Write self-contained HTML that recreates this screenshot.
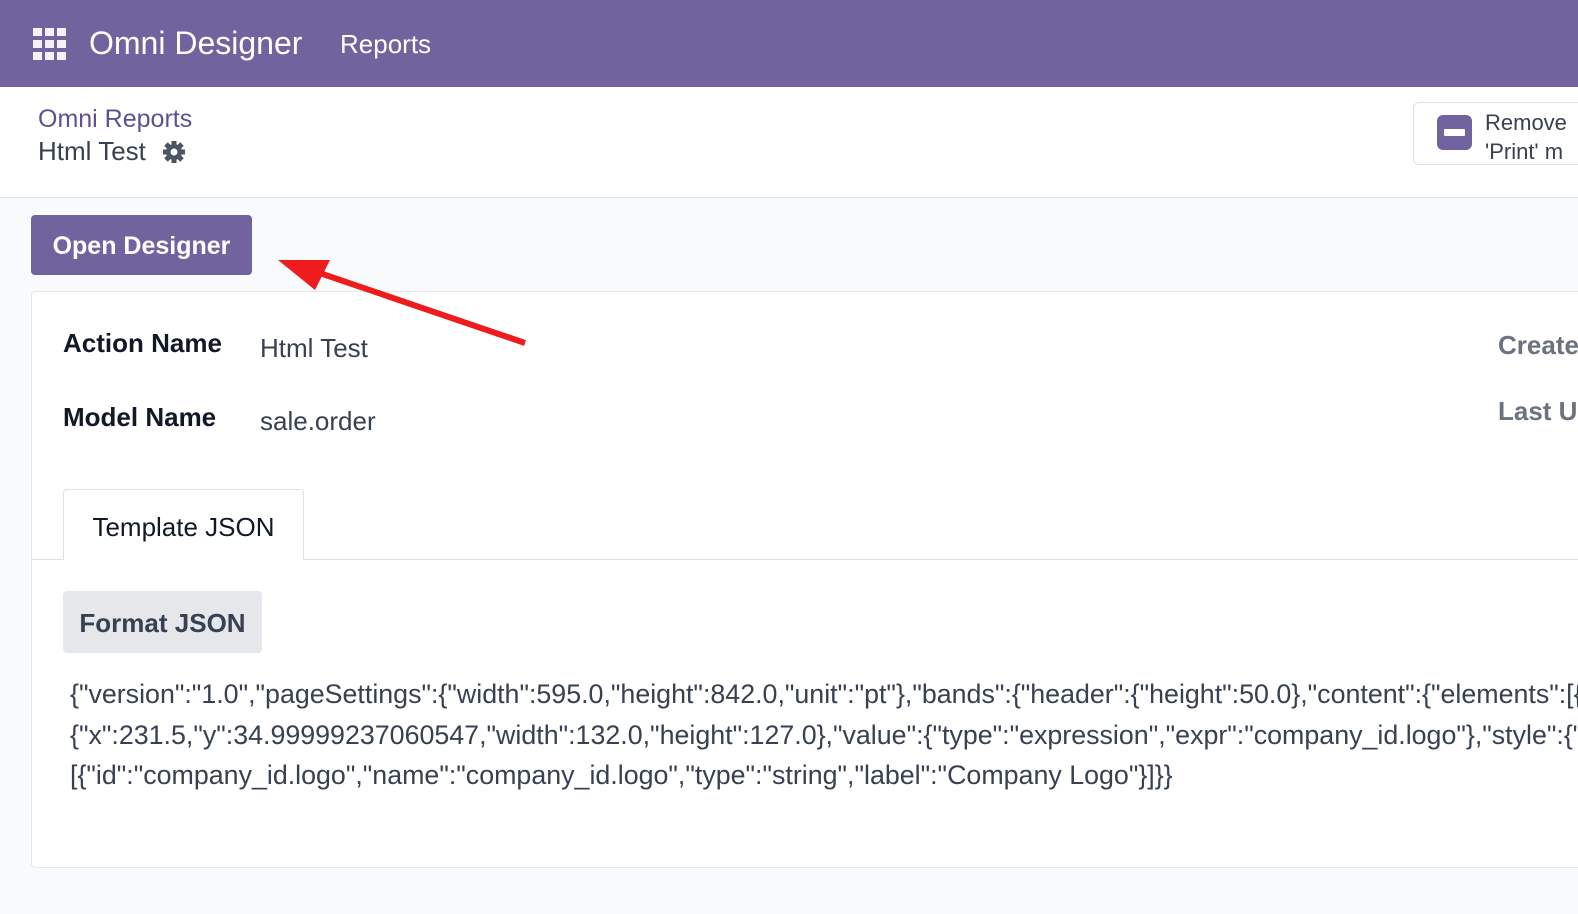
<!DOCTYPE html>
<html><head><meta charset="utf-8"><style>
*{margin:0;padding:0;box-sizing:border-box}
body{width:1578px;height:914px;overflow:hidden;background:#f9fafb;font-family:"Liberation Sans",sans-serif;color:#374151;position:relative}
.nav{position:absolute;left:0;top:0;width:1578px;height:87px;background:#71639e}
.abs{position:absolute;white-space:nowrap}
.hdr{position:absolute;left:0;top:87px;width:1578px;height:111px;background:#fff;border-bottom:1px solid #dee2e6}
.card{position:absolute;left:31px;top:291px;width:1560px;height:577px;background:#fff;border:1px solid #e5e7eb;border-radius:4px}
</style></head><body>
<div class="nav">
 <svg class="abs" style="left:33px;top:28px" width="34" height="32" viewBox="0 0 34 32" fill="#f3f2f7">
  <rect x="0" y="0" width="9" height="8"/><rect x="12" y="0" width="9" height="8"/><rect x="24" y="0" width="9" height="8"/>
  <rect x="0" y="12" width="9" height="8"/><rect x="12" y="12" width="9" height="8"/><rect x="24" y="12" width="9" height="8"/>
  <rect x="0" y="24" width="9" height="8"/><rect x="12" y="24" width="9" height="8"/><rect x="24" y="24" width="9" height="8"/>
 </svg>
 <div class="abs" style="left:89px;top:25px;font-size:32px;color:#fff">Omni Designer</div>
 <div class="abs" style="left:340px;top:29px;font-size:26px;color:#fff">Reports</div>
</div>
<div class="hdr">
 <div class="abs" style="left:38px;top:18px;font-size:25px;color:#5f5190">Omni Reports</div>
 <div class="abs" style="left:38px;top:49px;font-size:26px;color:#374151">Html Test</div>
 <svg class="abs" style="left:162px;top:53px" width="24" height="24" viewBox="0 0 24 24"><g fill="#4b5563"><circle cx="12" cy="12" r="8"/><g stroke="#4b5563" stroke-width="5"><line x1="12" y1="1" x2="12" y2="23"/><line x1="1" y1="12" x2="23" y2="12"/><line x1="4" y1="4" x2="20" y2="20"/><line x1="20" y1="4" x2="4" y2="20"/></g><circle cx="12" cy="12" r="3.5" fill="#fff"/></g></svg>
 <div class="abs" style="left:1413px;top:15px;width:180px;height:63px;border:1px solid #dee2e6;border-radius:6px;background:#fff"></div>
 <div class="abs" style="left:1437px;top:28px;width:35px;height:35px;background:#71639e;border-radius:6px"><div style="position:absolute;left:7px;top:14px;width:21px;height:7px;background:#fff;border-radius:1px"></div></div>
 <div class="abs" style="left:1485px;top:21px;font-size:22px;line-height:29px;color:#374151">Remove<br>'Print' m</div>
</div>
<div class="abs" style="left:31px;top:215px;width:221px;height:60px;background:#71639e;border-radius:4px;color:#fff;font-size:25px;font-weight:bold;text-align:center;line-height:62px">Open Designer</div>
<div class="card">
 <div class="abs" style="left:31px;top:36px;font-size:26px;font-weight:bold;color:#111827">Action Name</div>
 <div class="abs" style="left:228px;top:41px;font-size:26px">Html Test</div>
 <div class="abs" style="left:31px;top:110px;font-size:26px;font-weight:bold;color:#111827">Model Name</div>
 <div class="abs" style="left:228px;top:114px;font-size:26px">sale.order</div>
 <div class="abs" style="left:1466px;top:38px;font-size:26px;font-weight:bold;color:#6b7280">Create</div>
 <div class="abs" style="left:1466px;top:104px;font-size:26px;font-weight:bold;color:#6b7280">Last U</div>
 <div class="abs" style="left:0;top:267px;width:1560px;border-top:1px solid #dee2e6"></div>
 <div class="abs" style="left:31px;top:197px;width:241px;height:71px;background:#fff;border:1px solid #dee2e6;border-bottom:none;border-radius:4px 4px 0 0;font-size:26px;color:#111827;text-align:center;line-height:74px">Template JSON</div>
 <div class="abs" style="left:31px;top:299px;width:199px;height:62px;background:#e5e7eb;border-radius:4px;font-size:26px;font-weight:bold;color:#374151;text-align:center;line-height:64px">Format JSON</div>
 <div class="abs" style="left:38px;top:382px;font-size:26.8px;line-height:40.5px;color:#374151">{"version":"1.0","pageSettings":{"width":595.0,"height":842.0,"unit":"pt"},"bands":{"header":{"height":50.0},"content":{"elements":[{<br>{"x":231.5,"y":34.99999237060547,"width":132.0,"height":127.0},"value":{"type":"expression","expr":"company_id.logo"},"style":{"v<br>[{"id":"company_id.logo","name":"company_id.logo","type":"string","label":"Company Logo"}]}}</div>
</div>
<svg class="abs" style="left:270px;top:250px" width="265" height="100" viewBox="0 0 265 100"><line x1="255" y1="93" x2="35" y2="18" stroke="#ee1c1c" stroke-width="6"/><polygon points="8,10 60,10 45,40" fill="#ee1c1c"/></svg>
</body></html>
